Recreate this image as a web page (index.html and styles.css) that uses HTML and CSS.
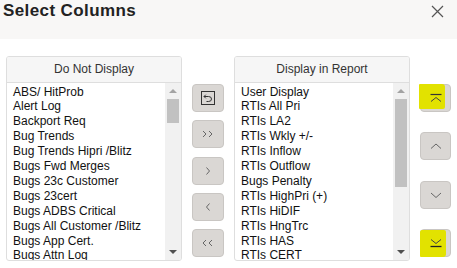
FILE: index.html
```html
<!DOCTYPE html>
<html>
<head>
<meta charset="utf-8">
<link rel="stylesheet" href="styles.css">
</head>
<body>
<div class="dialog">
  <div class="titlebar">
    <h1 class="title">Select Columns</h1>
    <button class="close" aria-label="Close">
      <svg width="13" height="13" viewBox="0 0 13 13"><path d="M1 1 L12 12 M12 1 L1 12" stroke="#555" stroke-width="1.2" fill="none"/></svg>
    </button>
  </div>
  <div class="body">
    <div class="panel">
      <div class="panel-head">Do Not Display</div>
      <div class="panel-body">
        <ul class="list">
          <li>ABS/ HitProb</li>
          <li>Alert Log</li>
          <li>Backport Req</li>
          <li>Bug Trends</li>
          <li>Bug Trends Hipri /Blitz</li>
          <li>Bugs Fwd Merges</li>
          <li>Bugs 23c Customer</li>
          <li>Bugs 23cert</li>
          <li>Bugs ADBS Critical</li>
          <li>Bugs All Customer /Blitz</li>
          <li>Bugs App Cert.</li>
          <li>Bugs Attn Log</li>
        </ul>
        <div class="scrollbar">
          <div class="sb-btn"><span class="tri up dim"></span></div>
          <div class="sb-track"><div class="sb-thumb" style="height:24px"></div></div>
          <div class="sb-btn"><span class="tri down"></span></div>
        </div>
      </div>
    </div>
    <div class="controls mid">
      <button class="btn" aria-label="Reset">
        <svg width="16" height="16" viewBox="0 0 16 16"><rect x="1.5" y="1.5" width="13" height="13" fill="none" stroke="#333" stroke-width="1"/><path d="M4 6.5 L8.5 6.5 Q11.5 6.5 11.5 9 Q11.5 11.5 8.5 11.5 L6.5 11.5 M5.8 4.7 L4 6.5 L5.8 8.3" fill="none" stroke="#333" stroke-width="1"/></svg>
      </button>
      <button class="btn" aria-label="Add all">
        <svg width="16" height="16" viewBox="0 0 16 16"><path d="M3 5 L6 8 L3 11 M9 5 L12 8 L9 11" fill="none" stroke="#666" stroke-width="1"/></svg>
      </button>
      <button class="btn" aria-label="Add">
        <svg width="16" height="16" viewBox="0 0 16 16"><path d="M6.5 4.5 L9.5 8 L6.5 11.5" fill="none" stroke="#666" stroke-width="1"/></svg>
      </button>
      <button class="btn" aria-label="Remove">
        <svg width="16" height="16" viewBox="0 0 16 16"><path d="M9.5 4.5 L6.5 8 L9.5 11.5" fill="none" stroke="#666" stroke-width="1"/></svg>
      </button>
      <button class="btn" aria-label="Remove all">
        <svg width="16" height="16" viewBox="0 0 16 16"><path d="M6 5 L3 8 L6 11 M12 5 L9 8 L12 11" fill="none" stroke="#666" stroke-width="1"/></svg>
      </button>
    </div>
    <div class="panel">
      <div class="panel-head">Display in Report</div>
      <div class="panel-body">
        <ul class="list">
          <li>User Display</li>
          <li>RTIs All Pri</li>
          <li>RTIs LA2</li>
          <li>RTIs Wkly +/-</li>
          <li>RTIs Inflow</li>
          <li>RTIs Outflow</li>
          <li>Bugs Penalty</li>
          <li>RTIs HighPri (+)</li>
          <li>RTIs HiDIF</li>
          <li>RTIs HngTrc</li>
          <li>RTIs HAS</li>
          <li>RTIs CERT</li>
        </ul>
        <div class="scrollbar">
          <div class="sb-btn"><span class="tri up dim"></span></div>
          <div class="sb-track"><div class="sb-thumb" style="height:88px"></div></div>
          <div class="sb-btn"><span class="tri down"></span></div>
        </div>
      </div>
    </div>
    <div class="controls side">
      <button class="btn marked mark-top" aria-label="Move to top">
        <svg width="16" height="16" viewBox="0 0 16 16"><path d="M2.5 4.5 L13.5 4.5" stroke="#333" stroke-width="1.2"/><path d="M3 11.5 L8 7.5 L13 11.5" fill="none" stroke="#444" stroke-width="1"/></svg>
      </button>
      <button class="btn" aria-label="Move up">
        <svg width="16" height="16" viewBox="0 0 16 16"><path d="M3 10.5 L8 6 L13 10.5" fill="none" stroke="#666" stroke-width="1"/></svg>
      </button>
      <button class="btn" aria-label="Move down">
        <svg width="16" height="16" viewBox="0 0 16 16"><path d="M3 6 L8 10.5 L13 6" fill="none" stroke="#666" stroke-width="1"/></svg>
      </button>
      <button class="btn marked mark-bottom" aria-label="Move to bottom">
        <svg width="16" height="16" viewBox="0 0 16 16"><path d="M3 4.5 L8 8.5 L13 4.5" fill="none" stroke="#444" stroke-width="1"/><path d="M2.5 11.5 L13.5 11.5" stroke="#222" stroke-width="1.3"/></svg>
      </button>
    </div>
  </div>
</div>
</body>
</html>
```

FILE: styles.css
```css
html, body {
  margin: 0;
  padding: 0;
  background: #ffffff;
}

body {
  width: 457px;
  height: 268px;
  overflow: hidden;
  font-family: "Liberation Sans", Arial, sans-serif;
}

.titlebar {
  height: 39px;
  background: #f8f7f6;
  display: flex;
  align-items: flex-start;
  justify-content: space-between;
  padding: 1px 0 0 3px;
  box-sizing: border-box;
}

.title {
  margin: 0;
  font-size: 17px;
  line-height: 20px;
  font-weight: bold;
  letter-spacing: 0.4px;
  color: #222;
}

.close {
  border: 0;
  background: transparent;
  padding: 0;
  margin: 4px 13px 0 0;
  width: 13px;
  height: 13px;
  display: flex;
}

.body {
  display: flex;
  align-items: flex-start;
  gap: 10px;
  padding: 17px 0 0 6px;
}

.panel {
  width: 176px;
  height: 205px;
  box-sizing: border-box;
  border: 1px solid #dedede;
  border-radius: 3px;
  display: flex;
  flex-direction: column;
  overflow: hidden;
}

.panel-head {
  height: 25px;
  flex: none;
  background: #f6f6f6;
  border-bottom: 1px solid #dedede;
  font-size: 12px;
  line-height: 25px;
  text-align: center;
  color: #333;
}

.panel-body {
  flex: 1;
  min-height: 0;
  display: flex;
}

.list {
  list-style: none;
  margin: 0;
  padding: 1.5px 0 0 0;
  flex: 1;
  min-width: 0;
  overflow: hidden;
  font-size: 12px;
  line-height: 14.9px;
  color: #111;
}

.list li {
  padding: 0 6px;
  white-space: nowrap;
}

.scrollbar {
  width: 16px;
  flex: none;
  background: #f1f1f1;
  display: flex;
  flex-direction: column;
}

.sb-btn {
  height: 16px;
  flex: none;
  display: flex;
  align-items: center;
  justify-content: center;
}

.sb-track {
  flex: 1;
  padding: 0 2px;
}

.sb-thumb {
  background: #c1c1c1;
}

.tri {
  width: 0;
  height: 0;
  border-left: 4px solid transparent;
  border-right: 4px solid transparent;
}

.tri.up {
  border-bottom: 4px solid #505050;
}

.tri.down {
  border-top: 4px solid #505050;
}

.tri.up.dim {
  border-bottom-color: #a3a3a3;
}

.controls {
  display: flex;
  flex-direction: column;
  justify-content: space-between;
  height: 173px;
  margin-top: 28px;
}

.btn {
  position: relative;
  width: 32px;
  height: 28px;
  box-sizing: border-box;
  padding: 0;
  background: #dad7d4;
  border: 1px solid #c9c6c3;
  border-radius: 4px;
  display: flex;
  align-items: center;
  justify-content: center;
}

.btn svg {
  position: relative;
  z-index: 1;
}

.side .btn {
  width: 31px;
}

.marked::before {
  content: "";
  position: absolute;
  background: #e2e200;
}

.mark-top::before {
  left: -2px;
  top: -1px;
  width: 26px;
  height: 25px;
  border-radius: 1px 3px 2px 1px;
}

.mark-bottom::before {
  left: -1px;
  top: 0px;
  width: 26px;
  height: 27px;
  border-radius: 2px 2px 3px 1px;
}
```
